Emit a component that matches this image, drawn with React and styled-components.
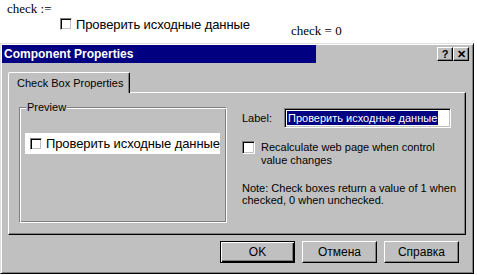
import styled, { createGlobalStyle } from 'styled-components'

const GlobalStyle = createGlobalStyle`
  html, body { margin: 0; padding: 0; background: #fff; }
  body { width: 477px; height: 275px; overflow: hidden; }
`

const Sheet = styled.div`
  height: 43px;
  font-family: "Liberation Serif", serif;
  font-size: 13px;
  color: #000;
`

const Formula = styled.div`
  padding: 1px 0 0 7px;
  height: 15px;
  line-height: 15px;
`

const SheetRow = styled.div`
  display: flex;
  align-items: flex-start;
  padding: 1px 0 0 60px;
`

const SheetControl = styled.div`
  display: flex;
  align-items: center;
  gap: 4px;
  height: 14px;
  width: 190px;
  flex: none;
  white-space: nowrap;
  font-family: "Liberation Sans", sans-serif;
  font-size: 13px;
  letter-spacing: -0.1px;
`

const Result = styled.div`
  margin: 6px 0 0 41px;
  line-height: 15px;
  white-space: nowrap;
`

const Box = styled.span`
  display: inline-block;
  box-sizing: border-box;
  width: ${p => p.size || 13}px;
  height: ${p => p.size || 13}px;
  background: #fff;
  border: 1px solid;
  border-color: #808080 #fff #fff #808080;
  box-shadow: inset 1px 1px #000, inset -1px -1px #c0c0c0;
  flex: none;
`

const Window = styled.div`
  width: 474px;
  height: 231px;
  box-sizing: border-box;
  background: #c0c0c0;
  border: 1px solid;
  border-color: #dfdfdf #000 #000 #dfdfdf;
  box-shadow: inset 1px 1px #fff, inset -1px -1px #808080;
  padding: 1px;
  font-family: "Liberation Sans", sans-serif;
  font-size: 11px;
  color: #000;
`

const TitleBar = styled.div`
  height: 18px;
  display: flex;
  align-items: center;
  padding: 0 3px 0 2px;
  background: linear-gradient(to right, #000080 314px, #c0c0c0 314px);
`

const Title = styled.span`
  color: #fff;
  font-weight: bold;
  font-size: 12px;
`

const Controls = styled.div`
  margin-left: auto;
  display: flex;
`

const CtrlButton = styled.div`
  width: 16px;
  height: 14px;
  box-sizing: border-box;
  background: #c0c0c0;
  border: 1px solid;
  border-color: #fff #000 #000 #fff;
  box-shadow: inset -1px -1px #808080;
  display: flex;
  align-items: center;
  justify-content: center;
  font-weight: bold;
  font-size: 11px;
  line-height: 1;
`

const Body = styled.div`
  padding: 9px 6px 0 6px;
`

const TabStrip = styled.div`
  display: flex;
  position: relative;
  z-index: 1;
  margin-bottom: -1px;
`

const Tab = styled.div`
  height: 21px;
  box-sizing: border-box;
  padding: 4px 6px 0 8px;
  background: #c0c0c0;
  border: 1px solid;
  border-bottom: none;
  border-color: #fff #000 transparent #fff;
  border-radius: 2px 2px 0 0;
  box-shadow: inset -1px 0 #808080;
  font-size: 11px;
`

const Panel = styled.div`
  height: 143px;
  box-sizing: border-box;
  border: 1px solid;
  border-color: #fff #000 #000 #fff;
  box-shadow: inset -1px -1px #808080;
  display: flex;
  padding: 14px 0 0 10px;
`

const Group = styled.div`
  position: relative;
  width: 208px;
  height: 116px;
  box-sizing: border-box;
  border: 1px solid;
  border-color: #808080 #fff #fff #808080;
  box-shadow: inset 1px 1px #fff, inset -1px -1px #808080;
  flex: none;
`

const Legend = styled.span`
  position: absolute;
  top: -7px;
  left: 6px;
  padding: 0 1px;
  background: #c0c0c0;
  font-size: 11px;
  line-height: 13px;
`

const PreviewRow = styled.div`
  margin: 25px 0 0 5px;
  width: 195px;
  height: 21px;
  background: #fff;
  display: flex;
  align-items: center;
  gap: 4px;
  padding-left: 5px;
  box-sizing: border-box;
  font-size: 13px;
  letter-spacing: -0.1px;
  white-space: nowrap;
  overflow: hidden;
`

const Side = styled.div`
  margin-left: 15px;
  padding-top: 1px;
  display: flex;
  flex-direction: column;
`

const Field = styled.div`
  display: flex;
  align-items: center;
  height: 20px;
`

const FieldLabel = styled.span`
  width: 42px;
  font-size: 11px;
`

const Input = styled.div`
  width: 167px;
  height: 20px;
  box-sizing: border-box;
  background: #fff;
  border: 1px solid;
  border-color: #808080 #fff #fff #808080;
  box-shadow: inset 1px 1px #000, inset -1px -1px #c0c0c0;
  display: flex;
  align-items: center;
  padding-left: 2px;
`

const Selected = styled.span`
  background: #000080;
  color: #fff;
  font-size: 11px;
  line-height: 14px;
  padding: 0 1px;
  white-space: nowrap;
`

const Option = styled.div`
  display: flex;
  gap: 6px;
  margin-top: 13px;
  font-size: 11px;
  line-height: 13px;
`

const Note = styled.div`
  margin-top: 15px;
  font-size: 11px;
  line-height: 12px;
  white-space: nowrap;
`

const Footer = styled.div`
  display: flex;
  justify-content: flex-end;
  gap: 7px;
  padding: 6px 7px 0 0;
`

const Button = styled.div`
  width: 75px;
  height: 22px;
  box-sizing: border-box;
  background: #c0c0c0;
  border: 1px solid;
  border-color: ${p => p.primary ? '#000' : '#fff #000 #000 #fff'};
  box-shadow: ${p => p.primary
    ? 'inset 1px 1px #fff, inset -1px -1px #000, inset -2px -2px #808080'
    : 'inset -1px -1px #808080'};
  display: flex;
  align-items: center;
  justify-content: center;
  font-size: 12px;
`

export default function App() {
  return (
    <>
      <GlobalStyle />
      <Sheet>
        <Formula>check :=</Formula>
        <SheetRow>
          <SheetControl><Box size={12} />Проверить исходные данные</SheetControl>
          <Result>check = 0</Result>
        </SheetRow>
      </Sheet>
      <Window>
        <TitleBar>
          <Title>Component Properties</Title>
          <Controls>
            <CtrlButton>?</CtrlButton>
            <CtrlButton>✕</CtrlButton>
          </Controls>
        </TitleBar>
        <Body>
          <TabStrip>
            <Tab>Check Box Properties</Tab>
          </TabStrip>
          <Panel>
            <Group>
              <Legend>Preview</Legend>
              <PreviewRow><Box size={12} />Проверить исходные данные</PreviewRow>
            </Group>
            <Side>
              <Field>
                <FieldLabel>Label:</FieldLabel>
                <Input><Selected>Проверить исходные данные</Selected></Input>
              </Field>
              <Option>
                <Box />
                <span>Recalculate web page when control<br />value changes</span>
              </Option>
              <Note>Note: Check boxes return a value of 1 when<br />checked, 0 when unchecked.</Note>
            </Side>
          </Panel>
          <Footer>
            <Button primary>OK</Button>
            <Button>Отмена</Button>
            <Button>Справка</Button>
          </Footer>
        </Body>
      </Window>
    </>
  )
}
